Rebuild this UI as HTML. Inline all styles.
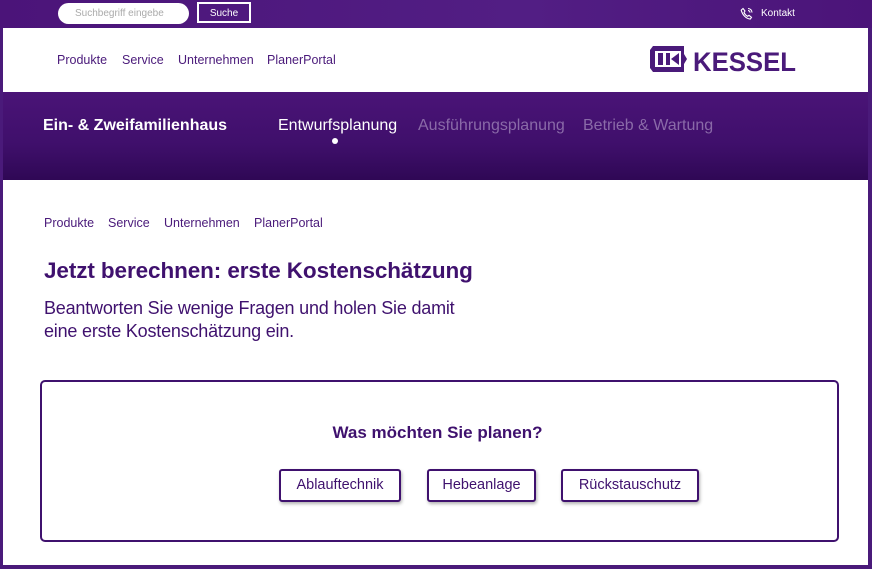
<!DOCTYPE html>
<html><head><meta charset="utf-8"><style>
*{margin:0;padding:0;box-sizing:border-box}
body{width:872px;height:569px;overflow:hidden;background:#4a1a7a;font-family:"Liberation Sans",sans-serif;position:relative}
.top{position:absolute;left:0;top:0;width:872px;height:28px;background:linear-gradient(90deg,#4b1479,#521e84 60%,#4b1479)}
.search{position:absolute;left:58px;top:3px;width:131px;height:21px;border-radius:11px;background:#fff;font-size:10px;color:#aaa;padding:5px 0 0 17px}
.btn{position:absolute;left:197px;top:2px;width:54px;height:21px;border:2px solid #fff;color:#fff;font-size:10px;text-align:center;line-height:19px}
.kontakt{position:absolute;top:8px;color:#fff;font-size:10px}
.nav{position:absolute;left:3px;top:28px;width:865px;height:64px;background:#fff}
.nav a{position:absolute;top:25px;font-size:12.5px;color:#4a1a7a}
.band{position:absolute;left:3px;top:92px;width:865px;height:88px;background:linear-gradient(180deg,#4a1477,#3f0f6b 60%,#2f0855)}
.band .t{position:absolute;top:25px;font-size:16px;color:#fff}
.main{position:absolute;left:3px;top:180px;width:865px;height:385px;background:#fff}
.bc{position:absolute;top:36px;font-size:12.5px;color:#4a1a7a}
h1{position:absolute;left:41px;top:78px;font-size:22.5px;color:#3f116e;font-weight:bold;letter-spacing:-0.1px;white-space:nowrap}
p.sub{position:absolute;left:41px;top:117px;font-size:18px;line-height:23px;color:#3f116e;letter-spacing:-0.2px}
.box{position:absolute;left:37px;top:200px;width:799px;height:162px;border:2px solid #3f116e;border-radius:5px}
.box h2{position:absolute;left:-2px;width:795px;text-align:center;top:41px;font-size:17px;color:#3f116e}
.ob{position:absolute;top:87px;height:33px;border:2px solid #3f116e;border-radius:3px;font-size:14.5px;color:#3f116e;text-align:center;line-height:29px;box-shadow:1px 2px 3px rgba(0,0,0,.3);background:#fff}
</style></head><body>
<div class="top">
<div class="search">Suchbegriff eingebe</div>
<div class="btn">Suche</div>
<svg style="position:absolute;left:740px;top:7px" width="14" height="14" viewBox="0 0 14 14" fill="none" stroke="#fff" stroke-width="1.1"><path d="M3 1.5l2 2.5-1 1.5c.8 1.7 2 3 3.6 3.8l1.4-1 2.5 2-1.3 1.8C6 11.5 2.5 8 1.2 3.2z"/><path d="M8 1.5a4 4 0 0 1 4 4M8 3.6a2 2 0 0 1 2 2"/></svg>
<div class="kontakt" style="left:761px">Kontakt</div>
</div>
<div class="nav">
<a style="left:54px">Produkte</a><a style="left:119px">Service</a><a style="left:175px">Unternehmen</a><a style="left:264px">PlanerPortal</a>
<svg style="position:absolute;left:645px;top:18px" width="150" height="26" viewBox="0 0 150 26">
<path d="M5 0h31v8l3 5-3 5v8H5l-3-4V4z" fill="#4a1a7a"/>
<rect x="7" y="5" width="26" height="16" fill="#fff"/>
<rect x="10" y="7" width="5" height="12" fill="#4a1a7a"/>
<rect x="18" y="7" width="4" height="12" fill="#4a1a7a"/>
<path d="M31 7l-8 6 8 6z" fill="#4a1a7a"/>
<text x="45" y="25" font-family="Liberation Sans" font-weight="bold" font-size="27" fill="#4a1a7a" textLength="103" lengthAdjust="spacingAndGlyphs">KESSEL</text>
</svg>
</div>
<div class="band">
<div class="t" style="left:40px;font-weight:bold">Ein- &amp; Zweifamilienhaus</div>
<div class="t" style="left:275px">Entwurfsplanung</div>
<div style="position:absolute;left:329px;top:46px;width:6px;height:6px;border-radius:50%;background:#fff"></div>
<div class="t" style="left:415px;color:#8a6aa8">Ausführungsplanung</div>
<div class="t" style="left:580px;color:#8a6aa8">Betrieb &amp; Wartung</div>
</div>
<div class="main">
<a class="bc" style="left:41px">Produkte</a><a class="bc" style="left:105px">Service</a><a class="bc" style="left:161px">Unternehmen</a><a class="bc" style="left:251px">PlanerPortal</a>
<h1>Jetzt berechnen: erste Kostenschätzung</h1>
<p class="sub">Beantworten Sie wenige Fragen und holen Sie damit<br>eine erste Kostenschätzung ein.</p>
<div class="box">
<h2>Was möchten Sie planen?</h2>
<div class="ob" style="left:237px;width:122px">Ablauftechnik</div>
<div class="ob" style="left:385px;width:109px">Hebeanlage</div>
<div class="ob" style="left:519px;width:138px">Rückstauschutz</div>
</div>
</div>
</body></html>
